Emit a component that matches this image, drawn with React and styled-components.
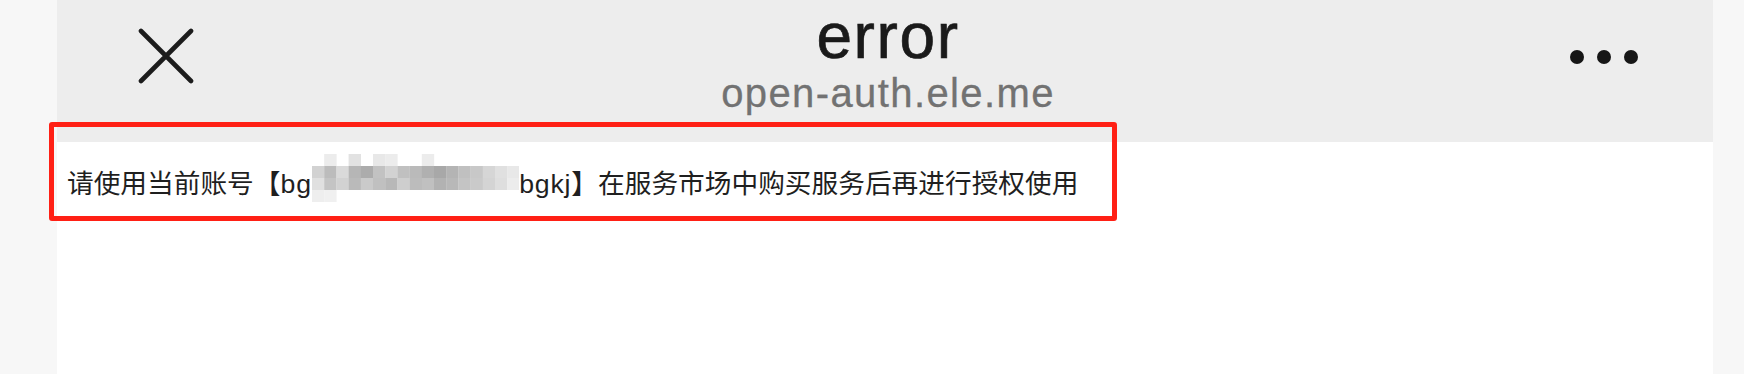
import React from "react";
import styled, { createGlobalStyle } from "styled-components";

const GlobalStyle = createGlobalStyle`
  html, body {
    margin: 0;
    padding: 0;
    background: #f7f7f7;
  }
  body {
    font-family: "Liberation Sans", Arial, sans-serif;
  }
`;

const Page = styled.div`
  width: 1744px;
  height: 374px;
  overflow: hidden;
  box-sizing: border-box;
  background: #f7f7f7;
  display: flex;
  padding: 0 31px 0 57px;
`;

const Panel = styled.div`
  position: relative;
  flex: 1;
  background: #ffffff;
  display: flex;
  flex-direction: column;
`;

const Header = styled.header`
  flex: none;
  height: 142px;
  box-sizing: border-box;
  background: #ededed;
  display: grid;
  grid-template-columns: 1fr auto 1fr;
  align-items: start;
  padding: 0 75px 0 81px;
`;

const CloseButton = styled.button`
  justify-self: start;
  margin-top: 28px;
  padding: 0;
  border: 0;
  background: none;
  width: 56px;
  height: 56px;
  display: flex;
  svg {
    display: block;
  }
`;

const TitleBlock = styled.div`
  padding-top: 4px;
  display: flex;
  flex-direction: column;
  align-items: center;
`;

const Title = styled.h1`
  margin: 0;
  font-family: "Liberation Sans", Arial, sans-serif;
  font-weight: 400;
  font-size: 64px;
  line-height: 64px;
  letter-spacing: 1.6px;
  color: #1a1a1a;
  -webkit-text-stroke: 0.7px #1a1a1a;
`;

const Domain = styled.div`
  margin-top: 5px;
  font-family: "Liberation Sans", Arial, sans-serif;
  font-size: 40px;
  line-height: 40px;
  letter-spacing: 1.4px;
  color: #727272;
  -webkit-text-stroke: 0.3px #727272;
`;

const MoreButton = styled.button`
  justify-self: end;
  margin-top: 50px;
  padding: 0;
  border: 0;
  background: none;
  display: flex;
  gap: 13px;
`;

const Dot = styled.span`
  width: 14px;
  height: 14px;
  border-radius: 50%;
  background: #161616;
`;

const Content = styled.main`
  flex: 1;
  padding: 12px 0 0 10px;
`;

const Message = styled.p`
  margin: 0;
  font-family: "Liberation Sans", "Noto Sans CJK SC", sans-serif;
  font-size: 26.7px;
  line-height: 40px;
  color: #1f1f1f;
  white-space: nowrap;
`;

const Latin = styled.span`
  letter-spacing: 0.8px;
`;

const Mosaic = styled.svg`
  display: inline-block;
  vertical-align: -9px;
`;

const Highlight = styled.div`
  position: absolute;
  left: -8px;
  top: 122px;
  width: 1068px;
  height: 99px;
  box-sizing: border-box;
  border: 5px solid #ff2015;
  border-radius: 3px;
  pointer-events: none;
`;

const greys = [
  [0, 236, 0, 226, 0, 232, 236, 0, 0, 236, 0, 0, 0, 0, 0, 0, 0],
  [210, 188, 218, 182, 172, 194, 210, 192, 186, 176, 168, 180, 192, 200, 214, 224, 232],
  [224, 196, 210, 186, 202, 192, 184, 206, 188, 192, 178, 184, 196, 202, 212, 222, 236],
  [238, 240, 0, 0, 0, 0, 0, 0, 0, 0, 0, 0, 0, 0, 0, 0, 0],
];

function Blur() {
  const size = 12.2;
  const w = greys[0].length * size;
  const h = greys.length * 12;
  return (
    <Mosaic width={w} height={h} viewBox={`0 0 ${w} ${h}`}>
      {greys.map((row, r) =>
        row.map((g, c) =>
          g ? (
            <rect
              key={`${r}-${c}`}
              x={c * size}
              y={r * 12}
              width={size + 0.2}
              height={12}
              fill={`rgb(${g},${g},${g})`}
            />
          ) : null
        )
      )}
    </Mosaic>
  );
}

export default function App() {
  return (
    <>
      <GlobalStyle />
      <Page>
        <Panel>
          <Header>
            <CloseButton aria-label="关闭">
              <svg width="56" height="56" viewBox="0 0 56 56">
                <path
                  d="M3 3 L53 53 M53 3 L3 53"
                  stroke="#1c1c1c"
                  strokeWidth="4.6"
                  strokeLinecap="round"
                  fill="none"
                />
              </svg>
            </CloseButton>
            <TitleBlock>
              <Title>error</Title>
              <Domain>open-auth.ele.me</Domain>
            </TitleBlock>
            <MoreButton aria-label="更多">
              <Dot />
              <Dot />
              <Dot />
            </MoreButton>
          </Header>
          <Content>
            <Message>
              请使用当前账号【<Latin>bg</Latin>
              <Blur />
              <Latin>bgkj</Latin>】在服务市场中购买服务后再进行授权使用
            </Message>
          </Content>
          <Highlight />
        </Panel>
      </Page>
    </>
  );
}
